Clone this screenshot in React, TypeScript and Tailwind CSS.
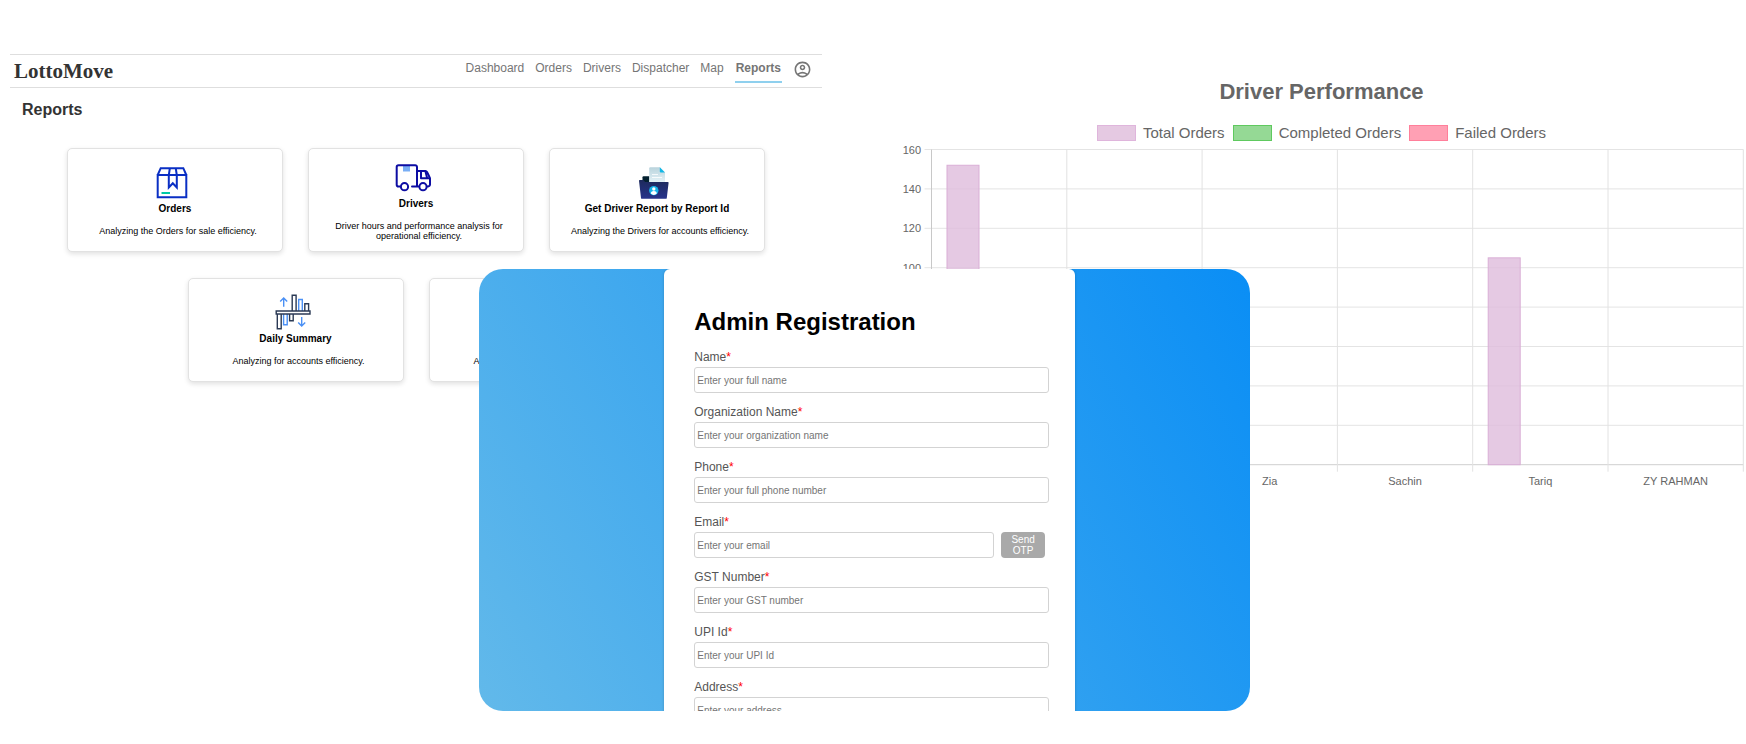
import type { ReactNode } from "react";
import { MdOutlineAccountCircle } from "react-icons/md";

const navLinks = ["Dashboard", "Orders", "Drivers", "Dispatcher", "Map", "Reports"];

function OrdersIcon() {
  return (
    <svg viewBox="0 0 36 36" className="w-9 h-9" fill="none" stroke="#0a2fc4" strokeWidth="2">
      <path d="M3.7 11v22.3h28.6V11z" />
      <path d="M3.7 11l3-6.8h22.6l3 6.8" />
      <path d="M15.8 4.5L14.8 11v12.5l4-4.2 4 4.2V11l-1-6.5" />
      <path d="M7.5 29H16" stroke="#00c9a7" />
    </svg>
  );
}

function TruckIcon() {
  return (
    <svg viewBox="0 0 36 36" className="w-9 h-9" fill="none" stroke="#0d0da3" strokeWidth="2" strokeLinecap="round" strokeLinejoin="round">
      <path d="M8 7h7v5.5H8z" fill="#79aef5" stroke="none" />
      <path d="M5 27.5H3.5a1.8 1.8 0 0 1-1.8-1.8V8a1.8 1.8 0 0 1 1.8-1.8h16.7A1.8 1.8 0 0 1 22 8v19" />
      <path d="M17 27.5h6.5" />
      <path d="M22 12h8.2a2 2 0 0 1 1.8 1l2.6 5.2a3 3 0 0 1 .4 1.4v6a1.8 1.8 0 0 1-1.8 1.8H32" />
      <path d="M26 12.5v6.7h8.3M30.5 12.5l1.5 6" />
      <circle cx="9.5" cy="27.7" r="3.6" />
      <circle cx="28" cy="27.7" r="3.6" />
    </svg>
  );
}

function FolderIcon() {
  return (
    <svg viewBox="0 0 36 36" className="w-9 h-9">
      <defs>
        <linearGradient id="paper" x1="0" y1="0" x2="0" y2="1">
          <stop offset="0" stopColor="#b9d3dc" />
          <stop offset="1" stopColor="#e6f4f9" />
        </linearGradient>
        <linearGradient id="folder" x1="0" y1="0" x2="0" y2="1">
          <stop offset="0" stopColor="#1d2a5c" />
          <stop offset="1" stopColor="#27348b" />
        </linearGradient>
      </defs>
      <path d="M6.5 13.2a1 1 0 0 1 1-1h6V19h-7z" fill="#03202f" />
      <path d="M13.2 4.2a1 1 0 0 1 1-1h9.6l5.2 5.2V19H13.2z" fill="url(#paper)" />
      <path d="M23.8 3.2L29 8.4h-4.2a1 1 0 0 1-1-1z" fill="#12b7e6" />
      <path d="M16 10.5h6M16 13.5h10" stroke="#fff" strokeWidth="0.8" />
      <path d="M3.7 16h3.6l1.8 1.9h22.7a.8.8 0 0 1 .8.9l-1.8 15.1a1 1 0 0 1-1 .9H6a1 1 0 0 1-1-.9L3 16.8a.8.8 0 0 1 .7-.8z" fill="url(#folder)" />
      <circle cx="17.8" cy="26.6" r="4.7" fill="#14b4ea" />
      <circle cx="17.8" cy="25" r="1.7" fill="#fff" />
      <path d="M14.8 29.6a3 2.6 0 0 1 6 0 4.6 4.6 0 0 1-6 0z" fill="#fff" />
    </svg>
  );
}

function SummaryIcon() {
  return (
    <svg viewBox="0 0 36 36" className="w-9 h-9" fill="none" stroke="#2b3a55" strokeWidth="1.4">
      <g stroke="#4a90f5">
        <path d="M23.7 17V5.5h3.6V17M8.6 20v10.8h3.6V20" />
        <path d="M8.7 12.8V4M5.2 7.4L8.7 3.9l3.5 3.5M26.7 23v8.8M23.2 28.6l3.5 3.5 3.5-3.5" />
      </g>
      <path d="M17.2 17V1.2h3.9V17M29.8 17V9.8h3.8V17M2.3 20v14.8h3.9V20M14.6 20v6.8h3.6V20" />
      <path d="M1.2 17h33.8v3H1.2z" />
    </svg>
  );
}

const reports: { title: string; text: string; icon: ReactNode }[] = [
  { title: "Orders", text: "Analyzing the Orders for sale efficiency.", icon: <OrdersIcon /> },
  { title: "Drivers", text: "Driver hours and performance analysis for operational efficiency.", icon: <TruckIcon /> },
  { title: "Get Driver Report by Report Id", text: "Analyzing the Drivers for accounts efficiency.", icon: <FolderIcon /> },
  { title: "Daily Summary", text: "Analyzing for accounts efficiency.", icon: <SummaryIcon /> },
  { title: "Accounts", text: "Analyzing for accounts efficiency.", icon: <SummaryIcon /> },
];

function Reports() {
  return (
    <section>
      <header className="flex justify-between h-[34px] border-y border-[#dedede] pl-1 pr-2.5">
        <a href="#" className="font-['Liberation_Serif',serif] font-bold text-[21px] leading-8 text-[#333]">
          LottoMove
        </a>
        <nav className="flex items-start gap-[11px] pt-[5px] text-xs leading-4 text-[#757575]">
          {navLinks.map((link) => (
            <a
              key={link}
              href="#"
              className={link === "Reports" ? "font-bold px-px pb-[5px] border-b-2 border-[#8fd0ee]" : ""}
            >
              {link}
            </a>
          ))}
          <button type="button" aria-label="Account">
            <MdOutlineAccountCircle size={19} />
          </button>
        </nav>
      </header>

      <h1 className="mt-2.5 ml-3 text-base leading-6 font-bold text-[#333]">Reports</h1>

      <div className="mt-[26px] flex flex-wrap justify-center gap-x-[25px] gap-y-[26px]">
        {reports.map((r) => (
          <a
            key={r.title}
            href="#"
            className="flex flex-col items-center justify-center w-[216px] h-[104px] rounded-[5px] border border-[#e2e2e2] bg-white shadow-[0_2px_5px_rgba(0,0,0,0.12)] text-center text-black"
          >
            <span className="pr-1.5">{r.icon}</span>
            <h2 className="mt-0.5 text-[10px] leading-[14px] font-bold">{r.title}</h2>
            <p className="mt-2.5 pl-5 pr-3.5 text-[9px] leading-[10px]">{r.text}</p>
          </a>
        ))}
      </div>
    </section>
  );
}

const legend = [
  { label: "Total Orders", swatch: "bg-[#e5c9e2] border-[#dfb5dc]" },
  { label: "Completed Orders", swatch: "bg-[#95d995] border-[#5fc95f]" },
  { label: "Failed Orders", swatch: "bg-[#ffa0b4] border-[#ff7f9a]" },
];

const drivers = [
  { name: "", total: 152 },
  { name: "", total: 0 },
  { name: "Zia", total: 0 },
  { name: "Sachin", total: 0 },
  { name: "Tariq", total: 105 },
  { name: "ZY RAHMAN", total: 0 },
];

const ticks = [160, 140, 120, 100, 80, 60, 40, 20, 0];

const LEFT = 32.5;
const TOP = 7.5;
const COL = 135.3;
const SCALE = 1.97;
const BOTTOM = TOP + 160 * SCALE;

function DriverChart() {
  return (
    <section className="pl-[77px] pr-0.5 pt-[78px]">
      <h2 className="text-center text-[22px] leading-7 font-bold text-[#666]">Driver Performance</h2>
      <ul className="mt-[18px] flex justify-center gap-2 text-[15px] leading-[18px] text-[#666]">
        {legend.map((l) => (
          <li key={l.label} className="flex items-center gap-[7px]">
            <span className={`w-[39px] h-4 border ${l.swatch}`} />
            {l.label}
          </li>
        ))}
      </ul>
      <svg viewBox="0 0 845 350" className="block w-full" fontSize="11" fill="#666">
        {ticks.map((t) => {
          const y = TOP + (160 - t) * SCALE;
          return (
            <g key={t}>
              <path d={`M${LEFT - 7} ${y}H844.3`} stroke={t === 0 ? "#cfcfcf" : "#e4e4e4"} />
              <text x="22" y={y + 4} textAnchor="end">{t}</text>
            </g>
          );
        })}
        {[0, 1, 2, 3, 4, 5, 6].map((i) => (
          <path
            key={i}
            d={`M${LEFT + i * COL} ${TOP}V${BOTTOM + 7}`}
            stroke={i === 0 ? "#c8c8c8" : "#e2e2e2"}
          />
        ))}
        {drivers.map((d, i) => {
          const x = LEFT + i * COL;
          return (
            <g key={i}>
              {d.total > 0 && (
                <rect
                  x={x + 15.5}
                  y={BOTTOM - d.total * SCALE}
                  width="32"
                  height={d.total * SCALE}
                  fill="#dfbbdc"
                  fillOpacity="0.8"
                  stroke="#d9aed6"
                />
              )}
              {d.name && (
                <text x={x + COL / 2} y={BOTTOM + 20} textAnchor="middle">{d.name}</text>
              )}
            </g>
          );
        })}
      </svg>
    </section>
  );
}

const fields = [
  { id: "name", label: "Name", placeholder: "Enter your full name" },
  { id: "organization", label: "Organization Name", placeholder: "Enter your organization name" },
  { id: "phone", label: "Phone", placeholder: "Enter your full phone number" },
  { id: "email", label: "Email", placeholder: "Enter your email" },
  { id: "gst", label: "GST Number", placeholder: "Enter your GST number" },
  { id: "upi", label: "UPI Id", placeholder: "Enter your UPI Id" },
  { id: "address", label: "Address", placeholder: "Enter your address" },
];

function Registration() {
  return (
    <div className="absolute top-[269px] left-[27.45%] w-[44.15%] h-[442px] overflow-hidden rounded-3xl bg-[linear-gradient(60deg,#62b9ea,#0a8ef5)]">
      <form className="ml-[24%] w-[53.3%] min-h-full rounded-t-md bg-white pt-[37px] pl-[30px] pr-[26px] shadow-[0_0_3px_rgba(0,0,0,0.2)]">
        <h2 className="mb-[11px] text-2xl leading-8 font-bold text-black">Admin Registration</h2>
        {fields.map((f) => (
          <div key={f.id} className="mb-[11px]">
            <label htmlFor={f.id} className="block mb-0.5 text-xs leading-4 text-[#555]">
              {f.label}
              <span className="text-[#f00]">*</span>
            </label>
            <div className="flex">
              <input
                id={f.id}
                type="text"
                placeholder={f.placeholder}
                className="flex-1 min-w-0 h-[26px] pl-0.5 rounded-[3px] border border-[#d3d3d3] bg-white text-[10px] placeholder:text-[#757575]"
              />
              {f.id === "email" && (
                <button
                  type="button"
                  className="ml-[7px] mr-1 w-11 h-[26px] rounded bg-[#a9a9a9] text-[10px] leading-[11px] text-white"
                >
                  Send OTP
                </button>
              )}
            </div>
          </div>
        ))}
      </form>
    </div>
  );
}

export default function App() {
  return (
    <div className="relative min-h-screen bg-white font-['Liberation_Sans',Arial,sans-serif]">
      <main className="grid grid-cols-[812fr_924fr] pl-2.5">
        <div className="pt-[54px]">
          <Reports />
        </div>
        <DriverChart />
      </main>
      <Registration />
    </div>
  );
}
